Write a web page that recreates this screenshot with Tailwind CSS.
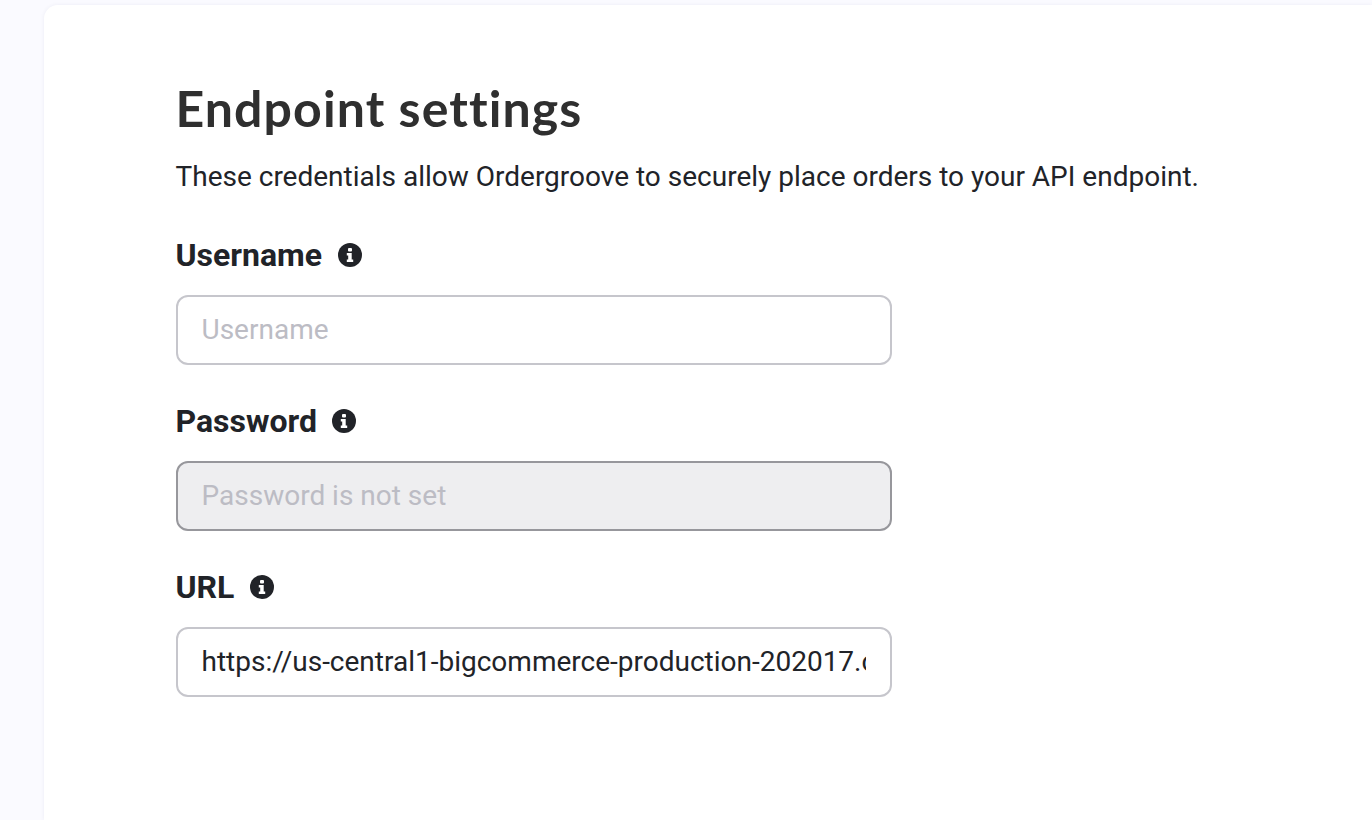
<!DOCTYPE html>
<html>
<head>
<meta charset="utf-8">
<script src="https://cdn.jsdelivr.net/npm/@tailwindcss/browser@4"></script>
</head>
<body class="h-[820px] overflow-hidden bg-[#fafaff] font-['Roboto',sans-serif]">
<div class="pl-[44px] pt-[5px] h-full">
  <main class="h-full bg-white rounded-tl-[14px] shadow-[0_0_4px_rgba(40,40,80,0.06)] pl-[132px] pt-[73px]">
    <h1 class="font-['Lato',sans-serif] font-bold text-[50px] tracking-[1.1px] leading-[60px] text-[#2f2f2f] -ml-[0.5px]">Endpoint settings</h1>
    <p class="mt-[22px] text-[28px] leading-[34px] text-[#212328] -ml-[0.5px]">These credentials allow Ordergroove to securely place orders to your API endpoint.</p>

    <div class="mt-[44px] flex items-center gap-[15.5px] h-[34px] -ml-[0.5px]">
      <label class="text-[32px] leading-[34px] font-bold text-[#212328]">Username</label>
      <svg class="w-[24px] h-[24px]" viewBox="0 0 24 24"><circle cx="12" cy="12" r="12" fill="#212328"/><rect x="10" y="5" width="4" height="3.4" rx="1" fill="#fff"/><path d="M8.8 10h4.9v6.4h1.5V19H8.8v-2.6h1.4v-3.8H8.8z" fill="#fff"/></svg>
    </div>
    <input class="mt-[23px] block w-[716px] h-[70px] rounded-[12px] border-2 border-[#c6c6cc] bg-white pl-[23.5px] pr-[24px] pb-[2px] text-[28px] text-[#212328] placeholder:text-[#bcbcc4] outline-none" placeholder="Username">

    <div class="mt-[39px] flex items-center gap-[15.5px] h-[34px] -ml-[0.5px]">
      <label class="text-[32px] leading-[34px] font-bold text-[#212328]">Password</label>
      <svg class="w-[24px] h-[24px]" viewBox="0 0 24 24"><circle cx="12" cy="12" r="12" fill="#212328"/><rect x="10" y="5" width="4" height="3.4" rx="1" fill="#fff"/><path d="M8.8 10h4.9v6.4h1.5V19H8.8v-2.6h1.4v-3.8H8.8z" fill="#fff"/></svg>
    </div>
    <input disabled class="mt-[23px] block w-[716px] h-[70px] rounded-[12px] border-2 border-[#97979c] bg-[#eeeef0] pl-[23.5px] pr-[24px] pb-[2px] text-[28px] placeholder:text-[#bcbcc4] outline-none" placeholder="Password is not set">

    <div class="mt-[39px] flex items-center gap-[15.5px] h-[34px] -ml-[0.5px]">
      <label class="text-[32px] leading-[34px] font-bold text-[#212328]">URL</label>
      <svg class="w-[24px] h-[24px]" viewBox="0 0 24 24"><circle cx="12" cy="12" r="12" fill="#212328"/><rect x="10" y="5" width="4" height="3.4" rx="1" fill="#fff"/><path d="M8.8 10h4.9v6.4h1.5V19H8.8v-2.6h1.4v-3.8H8.8z" fill="#fff"/></svg>
    </div>
    <input class="mt-[23px] block w-[716px] h-[70px] rounded-[12px] border-2 border-[#c6c6cc] bg-white pl-[23.5px] pr-[24.5px] pb-[2px] text-[28px] text-[#212328] outline-none" value="https://us-central1-bigcommerce-production-202017.cloudfunctions.net/orders">
  </main>
</div>
</body>
</html>
